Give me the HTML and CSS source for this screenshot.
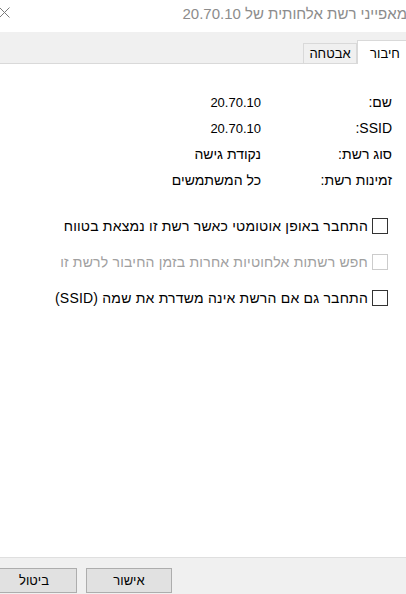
FILE: index.html
```html
<!DOCTYPE html>
<html lang="he" dir="rtl">
  <head>
    <meta charset="UTF-8" />
    <title>מאפייני רשת אלחותית</title>
    <link rel="stylesheet" href="styles.css">
  </head>
  <body>
    <div class="window">
      <header class="titlebar">
        <span class="title">מאפייני רשת אלחותית של 20.70.10</span>
        <span class="close">
          <svg width="11" height="11" viewBox="0 0 11 11">
            <path d="M0.5 0.5 L10.5 10.5 M10.5 0.5 L0.5 10.5" stroke="#7a7a7a" stroke-width="1" fill="none" />
          </svg>
        </span>
      </header>

      <nav class="tabs">
        <span class="tab active">חיבור</span>
        <span class="tab">אבטחה</span>
      </nav>

      <main class="page">
        <div class="props">
          <span class="label">שם:</span>
          <span class="value num">20.70.10</span>
          <span class="label">SSID:</span>
          <span class="value num">20.70.10</span>
          <span class="label">סוג רשת:</span>
          <span class="value">נקודת גישה</span>
          <span class="label">זמינות רשת:</span>
          <span class="value">כל המשתמשים</span>
        </div>

        <div class="options">
          <label class="option">
            <span class="box"></span>
            <span>התחבר באופן אוטומטי כאשר רשת זו נמצאת בטווח</span>
          </label>
          <label class="option disabled">
            <span class="box"></span>
            <span>חפש רשתות אלחוטיות אחרות בזמן החיבור לרשת זו</span>
          </label>
          <label class="option">
            <span class="box"></span>
            <span>התחבר גם אם הרשת אינה משדרת את שמה (SSID)</span>
          </label>
        </div>
      </main>

      <footer class="buttons">
        <button>אישור</button>
        <button>ביטול</button>
      </footer>
    </div>
  </body>
</html>
```

FILE: styles.css
```css
body {
  margin: 0;
  background: #ffffff;
  font-family: "Liberation Sans", "DejaVu Sans", sans-serif;
  font-size: 14px;
  color: #000;
}

.window {
  width: 406px;
  height: 594px;
  display: flex;
  flex-direction: column;
  overflow: hidden;
}

.titlebar {
  height: 32px;
  display: flex;
  justify-content: space-between;
  background: #fff;
}

.title {
  margin-right: -1px;
  padding-top: 5px;
  font-size: 15px;
  color: #8c8c8c;
  white-space: nowrap;
}

.close {
  padding-top: 7px;
  margin-left: -1px;
}

.close svg {
  display: block;
}

.tabs {
  height: 31px;
  display: flex;
  align-items: flex-end;
  background: #f0f0f0;
  border-bottom: 1px solid #d9d9d9;
}

.tab {
  height: 19px;
  width: 52px;
  line-height: 19px;
  font-size: 13px;
  text-align: center;
  border: 1px solid #d9d9d9;
  border-bottom: none;
  background: #f0f0f0;
}

.tab.active {
  height: 23px;
  width: 54px;
  line-height: 25px;
  margin-right: -7px;
  margin-bottom: -1px;
  background: #fff;
}

.page {
  flex: 1;
  background: #fff;
  padding-top: 25px;
}

.props {
  display: grid;
  grid-template-columns: 131px auto;
  grid-auto-rows: 26px;
  align-items: center;
  padding-right: 14px;
}

.value.num {
  font-size: 13px;
}

.options {
  display: flex;
  flex-direction: column;
  gap: 20px;
  margin-top: 25px;
  padding-right: 18px;
}

.option {
  display: flex;
  align-items: center;
  gap: 4px;
  height: 16px;
  letter-spacing: 0.2px;
}

.box {
  width: 14px;
  height: 14px;
  border: 1px solid #333;
  background: #fff;
}

.option.disabled {
  color: #a0a0a0;
}

.option.disabled .box {
  border-color: #cccccc;
}

.buttons {
  display: flex;
  justify-content: flex-end;
  gap: 9px;
  padding-top: 10px;
  box-sizing: border-box;
  height: 37px;
  background: #f0f0f0;
  border-top: 1px solid #dfdfdf;
}

.buttons button {
  width: 86px;
  height: 25px;
  margin: 0;
  font-family: inherit;
  font-size: 13px;
  color: #000;
  background: #e1e1e1;
  border: 1px solid #adadad;
  border-radius: 0;
}

.buttons button:last-child {
  margin-left: -9px;
}
```
